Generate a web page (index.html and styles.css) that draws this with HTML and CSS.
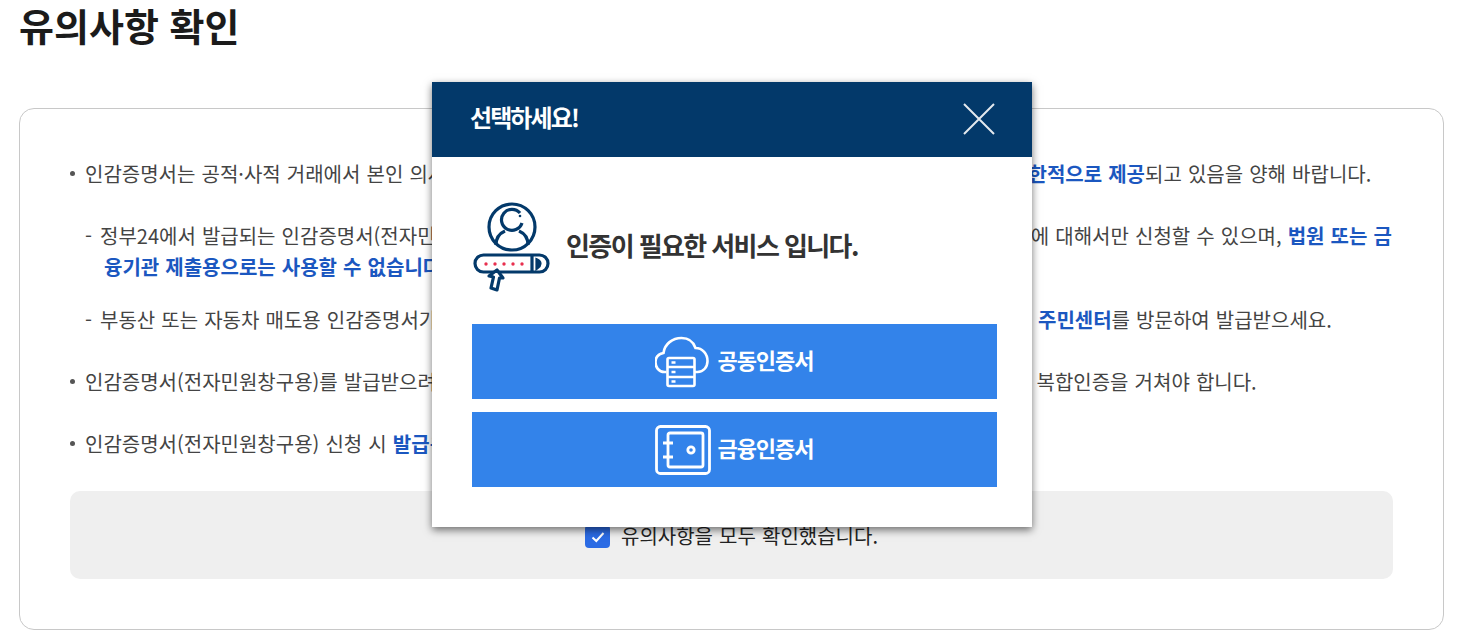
FILE: index.html
```html
<!DOCTYPE html>
<html lang="ko">
<head>
    <meta charset="UTF-8">
    <title>유의사항 확인</title>
    <link rel="stylesheet" href="styles.css">
</head>
<body>

    <h1 class="page-title">유의사항 확인</h1>

    <div class="notice-card">
        <ul class="notice-list">
            <li>인감증명서는 공적·사적 거래에서 본인 의사 확인의 수단으로 중요한 역할을 하고 있어 온라인 발급은 현재 일부 <strong>제한적으로 제공</strong>되고 있음을 양해 바랍니다.
                <ul class="sub-list">
                    <li>정부24에서 발급되는 인감증명서(전자민원창구용)는 인감보호 신청을 하지 않은 본인 명의의 일반기관 제출 용도에 대해서만 신청할 수 있으며, <strong>법원 또는 금융기관 제출용으로는 사용할 수 없습니다.</strong></li>
                    <li>부동산 또는 자동차 매도용 인감증명서가 필요하신 경우에는 온라인으로 신청할수없으므로 본인 대리인이 가까운 <strong>주민센터</strong>를 방문하여 발급받으세요.</li>
                </ul>
            </li>
            <li>인감증명서(전자민원창구용)를 발급받으려면 공동인증서 또는 금융인증서 인증과 함께 휴대폰 본인 확인 등 추가로 복합인증을 거쳐야 합니다.</li>
            <li>인감증명서(전자민원창구용) 신청 시 <strong>발급용도를 정확히 확인하세요.</strong></li>
        </ul>
        <div class="confirm-box">
            <label class="confirm-label">
                <span class="check-box">
                    <svg width="16" height="14" viewBox="0 0 16 14"><path d="M2.5 7.5 6.3 11 13.5 3" fill="none" stroke="#fff" stroke-width="2"/></svg>
                </span>
                유의사항을 모두 확인했습니다.
            </label>
        </div>
    </div>

    <!-- 인증 선택 팝업 -->
    <div class="modal">
        <div class="modal-head">
            <span class="modal-title">선택하세요!</span>
            <svg class="modal-close" width="32" height="32" viewBox="0 0 32 32"><path d="M1 1 31 31M31 1 1 31" stroke="#e4e9ee" stroke-width="2" fill="none"/></svg>
        </div>
        <div class="modal-body">
            <div class="auth-info">
                <svg class="auth-icon" width="80" height="92" viewBox="12 8 80 92">
                    <g fill="none" stroke="#03396a" stroke-width="3.2">
                        <circle cx="52" cy="35" r="23"/>
                        <path d="M60 21A10.500 10.500 0 1 0 62 31"/>
                        <path d="M45 39C38 42 36 47 36 53M59 39C66 42 68 47 68 53"/>
                        <rect x="15" y="63" width="73" height="17" rx="8.500"/>
                        <path d="M72 63V80M77 68C81 70 81 73 77 76Z"/>
                        <path d="M37 78 43 86H39.500L37 98 31 96 33.500 85 29 84Z" fill="#fff" stroke-linejoin="round"/>
                    </g>
                    <circle cx="60" cy="24" r="1.300" fill="#03396a"/>
                    <g fill="#e8304f">
                        <circle cx="26" cy="72" r="1.700"/>
                        <circle cx="35" cy="72" r="1.700"/>
                        <circle cx="44" cy="72" r="1.700"/>
                        <circle cx="53" cy="72" r="1.700"/>
                        <circle cx="62" cy="72" r="1.700"/>
                    </g>
                </svg>
                <p class="auth-text">인증이 필요한 서비스 입니다.</p>
            </div>
            <a class="auth-btn">
                <svg width="56" height="52" viewBox="1.500 0 56 52">
                    <g fill="none" stroke="#fff" stroke-width="2.600">
                        <path d="M13 36H11C5 36 2 31 2 26 2 21 5 18 10 17 11 8 19 2 28 2 35 2 40 6 42 12 49 12 54 18 54 25 54 31 50 36 44 36H41"/>
                        <rect x="14" y="22" width="27" height="28" rx="1.500"/>
                        <path d="M14 31H41M14 41H41"/>
                        <path d="M18 26.500H22M18 36H22M18 45.500H22"/>
                    </g>
                </svg>
                <span>공동인증서</span>
            </a>
            <a class="auth-btn">
                <svg width="56" height="50" viewBox="0 0 56 50">
                    <g fill="none" stroke="#fff" stroke-width="2.800">
                        <rect x="1.500" y="1.500" width="53" height="47" rx="4"/>
                        <rect x="13" y="8" width="35" height="34" rx="2"/>
                        <circle cx="36" cy="25" r="3.200"/>
                        <path d="M8 18H18M8 32H18"/>
                    </g>
                </svg>
                <span>금융인증서</span>
            </a>
        </div>
    </div>

</body>
</html>
```

FILE: styles.css
```css
body {
    font-family: "Noto Sans CJK KR", "Noto Sans", sans-serif;
    background-color: #ffffff;
    margin: 0;
    color: #444;
    height: 640px;
    overflow: hidden;
}
.page-title {
    font-size: 38px;
    font-weight: 700;
    height: 54px;
    line-height: 50px;
    color: #1b1b1b;
    margin: 0;
    padding-left: 19px;
}
.notice-card {
    margin: 54px 13px 0 19px;
    height: 522px;
    box-sizing: border-box;
    border: 1px solid #c8c8c8;
    border-radius: 15px;
    padding: 49px 50px 0;
}
.notice-list {
    list-style: none;
    margin: 0;
    padding: 0;
    font-size: 20px;
    line-height: 31px;
    word-spacing: 0.5px;
}
.notice-list > li {
    position: relative;
    padding-left: 15px;
    margin-bottom: 31px;
}
.notice-list > li::before {
    content: "";
    position: absolute;
    left: 0;
    top: 13px;
    width: 5px;
    height: 5px;
    border-radius: 50%;
    background-color: #555;
}
.notice-list strong {
    color: #1b57c0;
    font-weight: 700;
}
.sub-list {
    list-style: none;
    margin: 31px 0 0;
    padding: 0;
}
.sub-list li {
    padding-left: 19px;
    text-indent: -19px;
    margin-bottom: 22px;
}
.sub-list li::before {
    content: "-";
    display: inline-block;
    width: 15px;
    text-indent: 0;
}
.sub-list li:last-child {
    margin-bottom: 0;
}
.confirm-box {
    margin-top: 32px;
    height: 88px;
    background-color: #efefef;
    border-radius: 10px;
    display: flex;
    justify-content: center;
    align-items: center;
}
.confirm-label {
    display: flex;
    align-items: center;
    gap: 11px;
    font-size: 20px;
    word-spacing: 0.5px;
    color: #222;
}
.check-box {
    width: 25px;
    height: 23px;
    margin-top: 3px;
    background-color: #2b6be4;
    border-radius: 4px;
    display: flex;
    justify-content: center;
    align-items: center;
}
.modal {
    position: absolute;
    left: 432px;
    top: 82px;
    width: 600px;
    height: 445px;
    background-color: #ffffff;
    box-shadow: 0 3px 8px rgba(0, 0, 0, 0.55);
}
.modal-head {
    height: 75px;
    background-color: #03396a;
    display: flex;
    justify-content: space-between;
    align-items: center;
    padding: 0 37px 0 38px;
}
.modal-title {
    font-size: 24px;
    font-weight: 700;
    color: #ffffff;
    letter-spacing: -1.9px;
    padding-bottom: 6px;
}
.modal-close {
    margin-bottom: 2px;
}
.modal-body {
    padding: 43px 35px 0 40px;
}
.auth-info {
    display: flex;
    align-items: flex-end;
    gap: 14px;
    height: 92px;
    margin-bottom: 32px;
}
.auth-text {
    margin: 0 0 25px;
    font-size: 26px;
    font-weight: 700;
    color: #333;
    letter-spacing: -1.6px;
    line-height: 44px;
}
.auth-btn {
    display: flex;
    justify-content: center;
    align-items: center;
    gap: 6px;
    height: 75px;
    margin-bottom: 13px;
    background-color: #3383ea;
    color: #ffffff;
    font-size: 22px;
    font-weight: 700;
    letter-spacing: -1px;
}
.auth-btn span {
    padding-bottom: 6px;
}
```
